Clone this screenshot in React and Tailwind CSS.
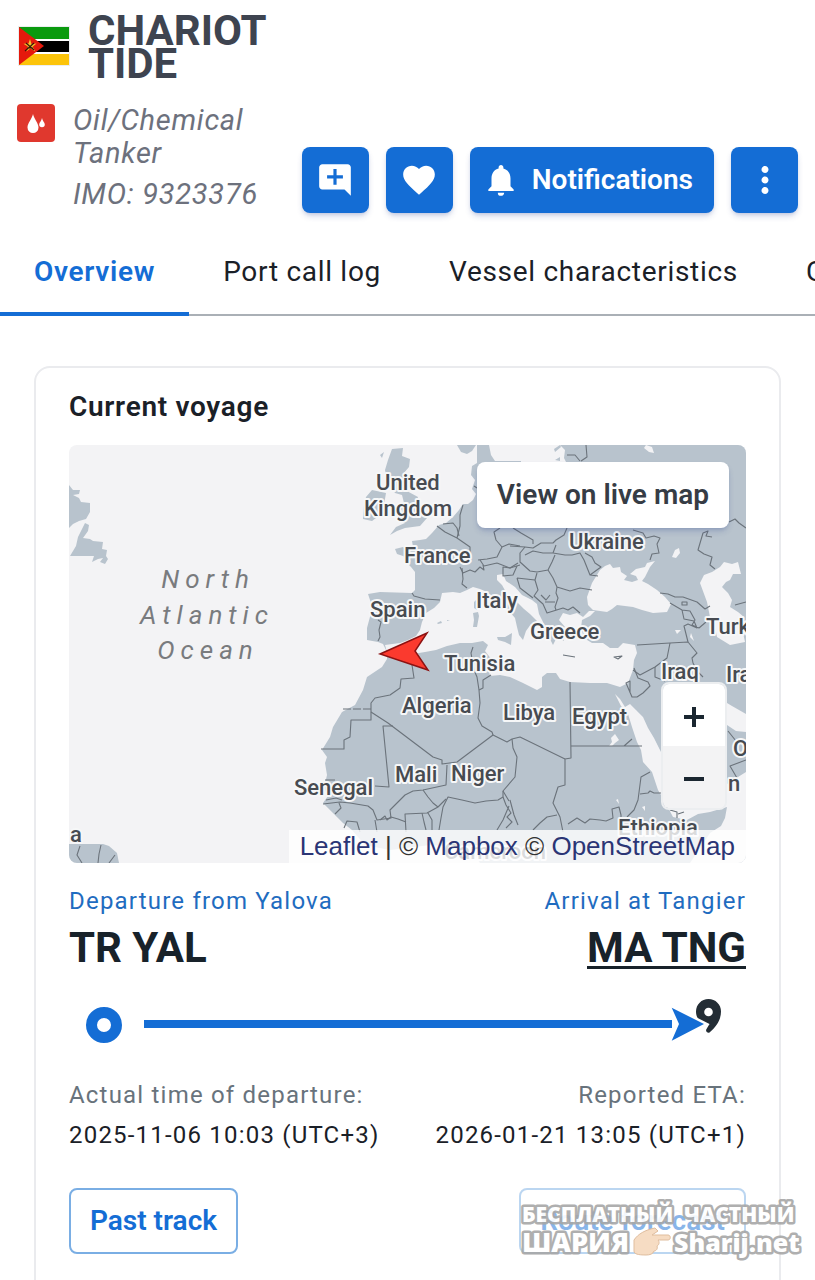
import React from "react";
import {
  MdAddComment,
  MdFavorite,
  MdMoreVert,
  MdNotifications,
} from "react-icons/md";

const tabs = ["Overview", "Port call log", "Vessel characteristics", "Current voyage"];

// Country names on the map: [text, x, baseline]
const countries = [
  ["United", 376, 490],
  ["Kingdom", 364, 516],
  ["France", 404, 563],
  ["Spain", 370, 617],
  ["Italy", 476, 608],
  ["Ukraine", 569, 549],
  ["Greece", 530, 639],
  ["Turkmenistan", 706, 634],
  ["Tunisia", 444, 671],
  ["Algeria", 402, 713],
  ["Libya", 503, 720],
  ["Egypt", 572, 724],
  ["Iraq", 661, 679],
  ["Iran", 726, 682],
  ["Senegal", 294, 795],
  ["Mali", 395, 782],
  ["Niger", 451, 781],
  ["Ethiopia", 618, 835],
  ["Cameroon", 444, 859],
  ["Oman", 733, 756],
  ["n", 728, 791],
  ["a", 70, 842],
];

const land = [
  // Europe, Asia and Africa
  "M477 445L489 445 491 455 495 461 521 461 521 445 746 445 746 863 480 863 470 848 430 845 390 850 365 845 352 830 343 823 333 813 323 803 328 796 324 788 327 775 325 763 327 757 322 750 330 737 333 727 342 712 355 705 363 690 367 677 382 667 387 659 387 652 383 644 378 642 367 640 367 628 371 613 371 603 368 594 380 592 412 593 415 590 415 572 411 567 407 563 411 561 403 556 397 554 395 549 403 547 406 549 413 547 412 541 420 540 426 539 432 533 439 525 446 523 453 517 459 510 463 504 468 504 473 500 476 494 472 489 475 480 471 475 472 466 477 463Z",
  // Great Britain, Ireland
  "M392 449L403 448 402 456 410 459 409 467 403 474 405 490 418 497 416 505 427 513 427 518 420 526 405 528 397 531 390 535 396 527 405 523 398 519 402 511 398 504 404 503 402 495 395 493 387 480 385 470 388 460Z",
  "M372 490L386 493 384 505 380 515 372 521 363 519 364 505 366 497ZM380 455l4-3-2 6z",
  "M457 445L476 445 472 451 467 454 461 452Z",
  // Newfoundland
  "M69 485L73 490 80 490 79 494 73 495 79 498 81 502 90 503 90 512 86 519 79 521 73 524 69 528Z",
  "M85 523L89 525 88 531 83 538 90 539 93 541 103 542 102 549 107 550 106 556 108 559 105 564 100 562 103 558 98 559 92 562 94 556 70 556 76 546 78 537Z",
  // South America
  "M69 844L103 844 109 846 117 853 119 863 69 863Z",
];

const water = [
  // Mediterranean
  "M385 645L400 643 408 640 416 636 420 630 422 622 426 613 434 608 440 602 442 593 453 592 460 593 467 590 473 587 480 589 487 592 493 598 502 604 509 611 515 618 517 627 519 635 523 640 526 631 531 624 536 628 538 622 530 614 524 609 515 600 507 594 502 585 497 580 497 575 503 574 506 581 515 587 522 595 532 600 537 604 539 614 543 622 547 633 553 645 557 637 564 641 562 629 565 627 559 620 563 613 570 615 577 613 583 617 589 611 595 611 590 616 582 620 581 628 584 638 592 643 603 643 610 648 618 648 623 643 635 645 637 653 634 660 633 670 628 683 620 687 607 683 590 683 570 682 560 679 556 673 547 673 542 677 542 687 537 690 523 683 510 677 500 675 490 676 488 667 492 660 485 651 488 645 483 641 472 643 460 643 447 646 436 650 425 652 413 654 400 652 387 652Z",
  // Black Sea and Azov
  "M587 597L592 583 600 570 605 566 610 564 613 568 620 567 621 572 627 576 624 580 632 582 638 580 636 576 630 574 636 569 645 567 647 563 655 561 650 567 647 573 645 577 642 581 648 584 657 590 665 597 671 604 667 612 653 613 642 610 633 607 617 605 612 609 607 612 593 610 588 605Z",
  // Caspian Sea
  "M720 567L724 562 732 564 738 562 741 574 733 574 730 580 726 582 722 587 728 593 732 600 730 607 738 612 744 617 742 628 745 642 730 645 717 637 715 627 710 617 707 602 700 583 704 575 712 572Z",
  // Baltic
  "M521 445L560 445 565 450 564 458 568 466 521 466Z",
  "M646 445L652 447 654 453 649 452 644 448ZM675 550l4-2 1 5-4 5-4-1zM675 630l6 0-4 4zM691 633l3 8-4-4z",
  // Red Sea
  "M615 694L620 699 625 707 630 704 636 710 643 717 648 728 654 738 660 750 670 770 680 790 684 806 687 820 673 817 664 800 658 790 652 772 643 762 641 750 637 742 632 727 628 714 621 706Z",
  // Persian Gulf
  "M722 700L732 706 746 714 746 732 736 731 727 725Z",
  // Arabian Sea
  "M746 772L738 777 732 781 727 784 705 796 673 813 682 818 687 820 698 814 710 812 727 807 725 818 721 826 710 833 690 863 746 863Z",
  "M611 738l4-4 2 3 2 3-4 3-3 3-3 0 3-4zM616 800l2-1 1 5zM642 807l3-1 0 5z",
];

const islands = [
  "M473 613L478 612 479 616 477 627 473 627 474 620Z",
  "M497 637L505 637 512 633 511 645 505 642 498 640Z",
  "M474 602l3-3 1 5-1 6-3-2zM437 623l4-2 1 2-4 1zM447 620l3 1-3 0z",
  "M554 449l6-4 1 2-6 5zM555 460l5-3 0 4z",
];

const borders = [
  "M412 665L414 678 401 679 400 688 390 695 375 698 371 703 371 720 351 720 350 737 344 740 344 749 321 749",
  "M371 712L388 723 433 757 442 760 442 764 457 762 493 735 507 742 512 739 520 737 565 759",
  "M393 726L383 726 389 787 375 786",
  "M447 765L446 785 423 790 413 791 405 795 397 803 390 810 391 818 377 820 373 810 368 806 350 803 340 802 323 804",
  "M325 780h10M326 800l10-2 6 2M335 814l6-6-2-5",
  "M473 647L471 653 474 670 477 677 479 690 480 703 478 718 482 726 492 732 493 735",
  "M479 690L483 688 483 680 491 675",
  "M512 739L513 748 517 757 515 777 503 791 503 797 498 800 486 801 475 803 462 800 448 797 443 807 441 818 439 830",
  "M503 797L506 805 511 813 507 817 512 822 506 828M509 806L503 820 497 830M503 791l6 10",
  "M423 790L428 797 433 803 438 807 427 813 405 814 406 832M422 813l2 9 2 8M428 813l4 7 0 10M438 807l8-8",
  "M344 828L347 821 357 822 360 832M375 820l2 12M380 820l5-4 2 4 4-3 7 2 8 3",
  "M570 682L571 758 565 759 565 785 558 787 553 803 560 817 563 832",
  "M571 746L642 746M624 746l8-7",
  "M533 830L540 823 547 817 557 815M510 800l4 15 4 10",
  "M568 824L577 818 585 823 590 819 600 820 606 821 613 818 612 809 619 807 621 815 621 825",
  "M627 817L634 810 638 800 641 777 650 772M640 794L648 793 650 791 654 793 664 793",
  "M670 810l7 2 0 6M684 812l-6 2",
  "M637 645L670 643 688 642 697 653 692 658 693 663 698 672 703 677",
  "M670 643L667 658 655 667 640 675 633 670",
  "M655 667l0 10 10 4M634 668L638 678 648 682 650 686 643 693 637 697 632 697 626 683 630 681 630 693",
  "M660 593L668 594 675 597 683 597 697 602 705 609 710 606",
  "M670 603L682 610 690 611 695 620 692 625 699 628 706 622M682 610l2 9 10 2 3 7-9-4-4 2 4 16M682 602l5 0 0 3-5 0z",
  "M715 569L710 565 712 557 704 554 698 550 703 533 708 531 706 536 712 537",
  "M729 522L735 519 739 523 746 528M735 605l11-3",
  "M633 530L643 533 646 538 654 536 660 538 657 544 659 553 652 554 650 560",
  "M567 528L564 535 556 540 553 543 541 543 533 548 525 547 510 546",
  "M513 528L521 533 533 540 533 544M525 555L533 551 543 553 553 553 556 545M553 553L565 555 572 555 580 553 584 560 590 575 598 576M585 553L592 557 595 563 601 567 590 575",
  "M525 547L520 553 520 562 530 571 537 572 548 570 552 562 555 555",
  "M518 563L510 568 503 567 503 576 513 575 517 566",
  "M537 573L535 580 538 590 534 596 543 604 547 613 563 608 568 610 573 607 580 613",
  "M548 570L553 578 557 587 556 593 558 598 555 607 556 610M557 587L570 591 580 588 592 590",
  "M517 578L535 580M517 578L520 588 533 598M541 595l5 5 4-5M545 602l10 0",
  "M437 526L445 532 457 538 470 547 470 554M457 538L460 526 460 515 463 505",
  "M443 524L453 523 457 528 459 536",
  "M460 567L463 573 470 570 475 572 480 567 484 570 483 565M478 560L487 559 497 557 502 547 509 544 520 546",
  "M462 568L463 579 462 584 467 588M497 563L510 568 520 565M480 560l4 6 13-3",
  "M502 547L496 540 494 532 500 528",
  "M412 593L414 596 425 599 440 600M378 620L381 622 379 630 380 637 378 641",
  "M567 455L575 455 580 461M586 445l1 12-6 4M474 486l3 2",
  "M728 731l8 10 0 4M746 760L730 766 737 778M563 655l12 2M614 657l8-1-4 3z",
];

const Flag = () => (
  <svg viewBox="0 0 52 40" className="h-10 w-[52px] shrink-0" aria-label="Mozambique">
    <rect width="52" height="40" fill="#eceef0" />
    <rect x="1" y="1" width="50" height="12" fill="#0a9a0e" />
    <rect x="1" y="13" width="50" height="2" fill="#fff" />
    <rect x="1" y="15" width="50" height="11" fill="#000" />
    <rect x="1" y="26" width="50" height="2" fill="#fff" />
    <rect x="1" y="28" width="50" height="11" fill="#fcc40a" />
    <path d="M1 1L26 20 1 39Z" fill="#e5190c" />
    <path d="M12 13l1.5 5 5-.5-3.8 3.2 2.5 4.8-4.7-3-4.2 3 1.5-5-4.3-2.8 5-.2z" fill="#f3c22a" />
    <path d="M7 25l9-8M8 17l8 7M9 22h6" stroke="#3a1508" strokeWidth="1.2" />
  </svg>
);

const TankerIcon = () => (
  <svg viewBox="0 0 38 38" className="size-[38px] shrink-0" aria-hidden="true">
    <rect width="38" height="38" rx="4" fill="#e0382e" />
    <path d="M16 10c1 5 5.500 9 5.500 13.500a5.500 5.500 0 0 1-11 0C10.500 19 15 15 16 10z" fill="#fff" />
    <path d="M25 14c.5 3 2.800 4.500 2.800 6.500a2.800 2.800 0 0 1-5.600 0C22.200 18.500 24.500 17 25 14z" fill="#fff" />
  </svg>
);

const iconButton =
  "flex h-[66px] w-[67px] items-center justify-center rounded-lg bg-[#146dd5] text-white shadow-md shadow-blue-900/20";

const Header = () => (
  <header className="px-[17px] pt-3.5">
    <div className="flex items-start gap-[18px]">
      <div className="pt-3 pl-px">
        <Flag />
      </div>
      <h1 className="w-48 text-[42px] leading-[33px] font-bold text-[#3e4450]">
        CHARIOT TIDE
      </h1>
    </div>
    <div className="mt-6 flex items-end justify-between">
      <div className="flex w-64 items-start gap-[18px] pb-0.5">
        <TankerIcon />
        <div className="text-[29px] leading-[33px] tracking-wide whitespace-nowrap text-[#6d717d] italic">
          <p>
            Oil/Chemical
            <br />
            Tanker
          </p>
          <p className="mt-2">IMO: 9323376</p>
        </div>
      </div>
      <div className="flex gap-[17px]">
        <button aria-label="Add note" className={iconButton}>
          <MdAddComment size={38} />
        </button>
        <button aria-label="Add to favourites" className={iconButton}>
          <MdFavorite size={38} />
        </button>
        <button className="flex h-[66px] items-center gap-3 rounded-lg bg-[#146dd5] pr-[21px] pl-3 text-[28px] font-semibold text-white shadow-md shadow-blue-900/20">
          <MdNotifications size={38} />
          Notifications
        </button>
        <button aria-label="More" className={iconButton}>
          <MdMoreVert size={42} />
        </button>
      </div>
    </div>
  </header>
);

const Tabs = () => (
  <nav className="mt-[17px] flex border-b-2 border-[#aab0b6] text-[28px] tracking-wide whitespace-nowrap">
    {tabs.map((tab, i) => (
      <a
        key={tab}
        href="#"
        className={
          i === 0
            ? "-mb-0.5 border-b-4 border-[#146dd5] px-[34px] pt-6 pb-[22px] leading-9 font-semibold text-[#146dd5]"
            : "px-[34px] pt-6 pb-[22px] leading-9 text-[#1a2027]"
        }
      >
        {tab}
      </a>
    ))}
  </nav>
);

const VoyageMap = () => (
  <div className="relative mt-5 h-[418px] overflow-hidden rounded-lg bg-[#f3f3f5]">
    <svg
      viewBox="69 445 677 418"
      preserveAspectRatio="xMidYMid slice"
      className="size-full"
      role="img"
      aria-label="Map of the vessel position"
    >
      <g fill="#b8c3cd">
        {land.map((d) => (
          <path key={d} d={d} />
        ))}
      </g>
      <g fill="#f3f3f5">
        {water.map((d) => (
          <path key={d} d={d} />
        ))}
      </g>
      <g fill="#b8c3cd">
        {islands.map((d) => (
          <path key={d} d={d} />
        ))}
      </g>
      <g fill="none" stroke="#6b737b" strokeWidth="1.1" strokeLinejoin="round">
        {borders.map((d) => (
          <path key={d} d={d} />
        ))}
        <path d="M80 846L77 855 82 863M101 845L99 854 98 863M115 855L109 863" />
        <path d="M343 709h28" strokeDasharray="8 2" />
      </g>
      <g
        className="font-['Roboto'] text-[22px] font-medium"
        fill="#474b51"
        stroke="#f6f7f8"
        strokeWidth="4"
        strokeLinejoin="round"
        paintOrder="stroke"
      >
        {countries.map(([name, x, y]) => (
          <text key={name} x={x} y={y}>
            {name}
          </text>
        ))}
      </g>
      <g
        className="font-['Roboto'] text-[26px] tracking-[6px] italic"
        fill="#797b7e"
        textAnchor="middle"
      >
        <text x="208" y="588">North</text>
        <text x="207" y="624">Atlantic</text>
        <text x="208" y="659">Ocean</text>
      </g>
      <path
        d="M380 654L427 633 415 651 428 670Z"
        fill="#fb3a2e"
        stroke="#8c1212"
        strokeWidth="1.500"
      />
    </svg>

    <button className="absolute top-[17px] right-[17px] h-[66px] rounded-lg bg-white px-5 text-[28px] font-semibold text-[#363c45] shadow-md shadow-blue-900/20">
      View on live map
    </button>

    {/* Zoom control */}
    <div className="absolute right-[19px] bottom-[53px] flex w-[66px] flex-col overflow-hidden rounded-lg border-2 border-[#eceef0] text-[#1a2630]">
      <button
        aria-label="Zoom in"
        className="flex h-[62px] items-center justify-center bg-white pt-1"
      >
        <svg viewBox="0 0 20 20" className="size-5" stroke="currentColor" strokeWidth="4">
          <path d="M10 0v20M0 10h20" />
        </svg>
      </button>
      <button
        aria-label="Zoom out"
        className="flex h-[62px] items-center justify-center bg-[#f3f3f4] pt-1"
      >
        <svg viewBox="0 0 20 20" className="size-5" stroke="currentColor" strokeWidth="4">
          <path d="M0 10h20" />
        </svg>
      </button>
    </div>

    <div className="absolute right-0 bottom-0 bg-white/80 px-[11px] font-['Liberation_Sans'] text-[26px] leading-[33px] whitespace-nowrap text-[#333]">
      <a href="#" className="text-[#2b3575]">Leaflet</a> | ©{" "}
      <a href="#" className="text-[#2b3575]">Mapbox</a> ©{" "}
      <a href="#" className="text-[#2b3575]">OpenStreetMap</a>
    </div>
  </div>
);

// Voyage progress: start port, travelled line, destination pin
const Progress = () => (
  <div className="relative mt-[27px] flex h-12 items-center pr-[74px] pl-[17px]">
    <span className="mt-0.5 size-9 shrink-0 rounded-full border-[11px] border-[#146dd5]" />
    <span className="ml-[22px] h-2 flex-1 bg-[#146dd5]" />
    <svg
      viewBox="0 0 60 48"
      className="absolute right-[18px] h-12 w-[60px] overflow-visible"
      aria-hidden="true"
    >
      <path
        d="M40.500-1C47.500-1 53 4.500 53 11.500 53 20 48 27 41.500 32.500 39.500 33.500 37 31 38.500 29L41.500 24C33 24.500 28 18.500 28 11.500 28 4.500 33.500-1 40.500-1Z"
        fill="#232d35"
      />
      <circle cx="40.500" cy="12" r="4.300" fill="#fff" />
      <path
        d="M3.700 7.700L36 24 3.700 40.700 11 24Z"
        fill="#146dd5"
        stroke="#fff"
        strokeWidth="5"
        paintOrder="stroke"
      />
    </svg>
  </div>
);

const Watermark = () => (
  <svg
    viewBox="0 0 290 70"
    className="pointer-events-none absolute right-[-62px] bottom-[-11px] h-[70px] w-[290px]"
  >
    <g
      className="font-['Open_Sans'] font-extrabold"
      fill="#fff"
      stroke="#a7a7a7"
      strokeWidth="5"
      strokeLinejoin="round"
      paintOrder="stroke"
      opacity="0.9"
    >
      <text x="4" y="27" className="text-[21px]">БЕСПЛАТНЫЙ</text>
      <text x="166" y="27" className="text-[21px]">ЧАСТНЫЙ</text>
      <text x="4" y="57" className="text-[27px]">ШАРИЯ</text>
      <text x="156" y="57" className="text-[25px]">Sharij.net</text>
    </g>
    <path
      d="M116 45C120 39 127 35 137 33L140 36 134 40H150C153 40 153 45 150 45H140C142 47 141 50 139 51 140 54 138 56 136 56 135 59 132 60 128 60 120 60 116 59 116 56Z"
      fill="#f6dcc3"
      stroke="#dfbd9e"
      strokeWidth="1"
    />
  </svg>
);

const VoyageCard = () => (
  <section className="mx-[34px] mt-[50px] rounded-2xl border-2 border-[#eaebee] px-[33px] pt-[21px] pb-16">
    <h2 className="text-[28px] leading-9 font-semibold tracking-wide text-[#1a2027]">
      Current voyage
    </h2>
    <VoyageMap />

    <div className="mt-5 flex justify-between">
      <div>
        <a href="#" className="block text-[24px] leading-9 tracking-wider text-[#1f6cc0]">
          Departure from Yalova
        </a>
        <p className="mt-1 text-[42px] leading-[50px] font-bold text-[#18222a]">TR YAL</p>
      </div>
      <div className="text-right">
        <a href="#" className="block text-[24px] leading-9 tracking-wider text-[#1f6cc0]">
          Arrival at Tangier
        </a>
        <a
          href="#"
          className="mt-1 block text-[42px] leading-[50px] font-bold text-[#18222a] underline decoration-3 underline-offset-4"
        >
          MA TNG
        </a>
      </div>
    </div>

    <Progress />

    <div className="mt-[27px] flex justify-between text-[24px] leading-10 tracking-wider">
      <div>
        <p className="text-[#68737c]">Actual time of departure:</p>
        <p className="text-[#1a2027]">2025-11-06 10:03 (UTC+3)</p>
      </div>
      <div className="text-right">
        <p className="text-[#68737c]">Reported ETA:</p>
        <p className="text-[#1a2027]">2026-01-21 13:05 (UTC+1)</p>
      </div>
    </div>

    <div className="relative mt-[33px] flex justify-between text-[28px] font-semibold text-[#146dd5]">
      <button className="h-[66px] rounded-lg border-2 border-[#7aaee4] px-[19px]">
        Past track
      </button>
      <button
        disabled
        className="h-[66px] rounded-lg border-2 border-[#7aaee4] px-[19px] opacity-50"
      >
        Route forecast
      </button>
      <Watermark />
    </div>
  </section>
);

const App = () => {
  return (
    <div className="overflow-hidden bg-white font-['Roboto',sans-serif]">
      <Header />
      <Tabs />
      <VoyageCard />
    </div>
  );
};

export default App;
